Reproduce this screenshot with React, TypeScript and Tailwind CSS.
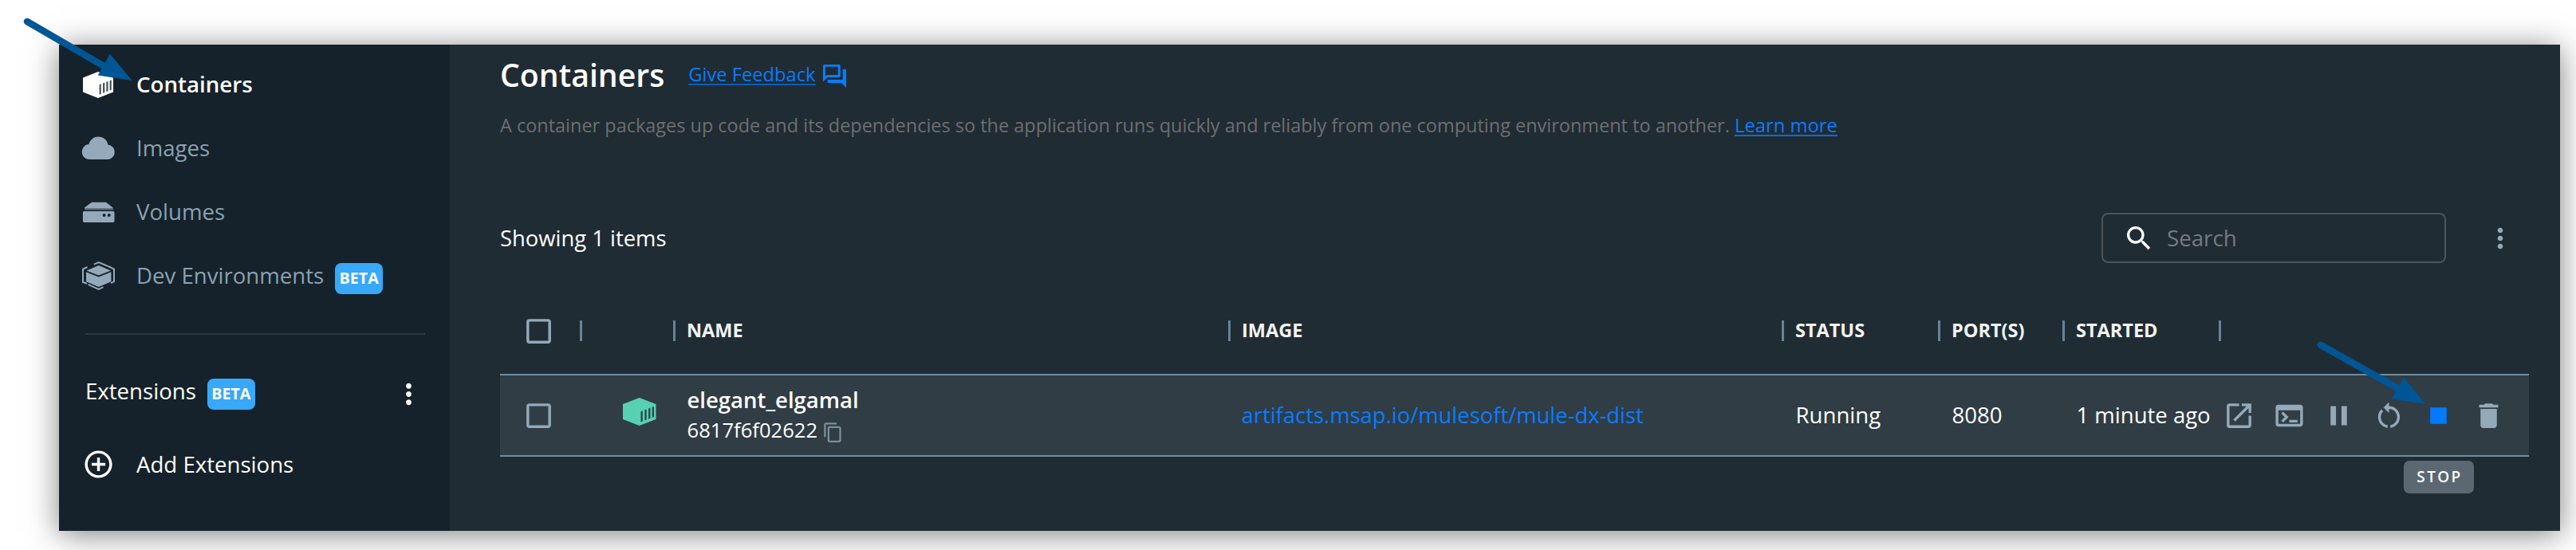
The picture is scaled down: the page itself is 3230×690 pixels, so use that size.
import React from "react";
import type { ReactNode } from "react";
import {
  MdAddCircleOutline,
  MdCheckBoxOutlineBlank,
  MdContentCopy,
  MdDelete,
  MdMoreVert,
  MdOpenInNew,
  MdOutlineForum,
  MdPause,
  MdRestartAlt,
  MdSearch,
  MdStop,
  MdTerminal,
} from "react-icons/md";

function ContainerIcon({ className }: { className: string }) {
  return (
    <svg viewBox="0 0 41.5 35" preserveAspectRatio="none" className={className}>
      <path fill="currentColor" d="M20.7 0 41.5 8v19L20.7 35 0 27V8Z" />
      <path
        fill="#202c33"
        opacity=".85"
        d="M22.500 17.200v13.200l2.300-.9V16.300ZM27.400 15.300v13.200l2.300-.9V14.400ZM32.100 13.500v13.200l2.300-.9V12.600ZM36.700 11.800v13.200l2.300-.9V10.900Z"
      />
    </svg>
  );
}

function CloudIcon() {
  return (
    <svg viewBox="0 0 42 42" className="size-[42px]" fill="currentColor">
      <path d="M10 35H32.600C37.900 35 41.700 31 41.700 25.800C41.700 20.800 38.200 17.200 33.400 16.500C32.300 10.400 27.300 6.600 21.400 6.600C15.800 6.600 11.400 9.900 9.500 15.700C4.500 16.300 .8 20.500 .8 25.500C.8 31 5 35 10 35Z" />
    </svg>
  );
}

function VolumeIcon() {
  return (
    <svg viewBox="0 0 42 42" className="size-[42px]" fill="currentColor">
      <path d="M12.900 8.700h18l8.600 6.800v1H4v-1Z" />
      <path d="M4 16.500h36.200v2H4Z" opacity=".55" />
      <path
        fillRule="evenodd"
        d="M3.700 20h36q1.800 0 1.800 1.800v10.400q0 1.800-1.800 1.800h-36q-1.800 0-1.800-1.800V21.800Q1.900 20 3.700 20ZM26.600 25a2 2 0 1 0 4 0a2 2 0 1 0-4 0ZM32.800 25a2 2 0 1 0 4 0a2 2 0 1 0-4 0Z"
      />
    </svg>
  );
}

function DevEnvironmentsIcon() {
  return (
    <svg viewBox="0 0 42 42" className="size-[42px]" fill="none" stroke="currentColor">
      <path fill="currentColor" stroke="none" d="m21.700 8 15.300 6.500-15.300 6-15.300-6Z" />
      <path fill="currentColor" stroke="none" d="m6 16.200 15.700 6.200 15.700-6.200v12L21.700 35 6 28.200Z" />
      <path strokeWidth="2" d="M15.800 6.600 21.700 4l15 6.300" />
      <path strokeWidth="2" d="m35.500 9.800 5.500 2.800v15.600l-4 1.900" />
      <path strokeWidth="2" d="M7.500 10 2 12.600V29l5 1.800" />
      <path strokeWidth="2" d="m8.500 31.800 13.200 6 5.800-2.600" />
    </svg>
  );
}

function Beta() {
  return (
    <span className="mt-[6px] flex h-[39px] w-[60px] items-center justify-center rounded-[8px] bg-[#38a8f9] text-[19.700px] font-bold text-white">
      BETA
    </span>
  );
}

function NavItem({ icon, label, active, beta }: { icon: ReactNode; label: string; active?: boolean; beta?: boolean }) {
  return (
    <div
      className={
        active
          ? "flex h-20 items-center text-[27.700px] font-semibold text-white"
          : "flex h-20 items-center text-[27.600px] text-[#8ba1b2]"
      }
    >
      <span className="flex w-[42px] shrink-0 justify-center text-[#94a9b9]">{icon}</span>
      <span className="ml-[27px] whitespace-nowrap">{label}</span>
      {beta && (
        <span className="ml-[14px]">
          <Beta />
        </span>
      )}
    </div>
  );
}

function Sidebar() {
  return (
    <aside className="flex w-[490px] shrink-0 flex-col bg-[#15222b] pt-[10px] pl-[28px]">
      <NavItem active icon={<ContainerIcon className="h-[33px] w-[38px] text-white" />} label="Containers" />
      <NavItem icon={<CloudIcon />} label="Images" />
      <NavItem icon={<VolumeIcon />} label="Volumes" />
      <NavItem beta icon={<DevEnvironmentsIcon />} label="Dev Environments" />
      <div className="mt-8 ml-[5px] h-[2px] w-[426px] bg-[#2a3841]" />
      <div className="mt-[31px] ml-[5px] flex h-20 w-[426px] items-center text-[27.600px] text-white">
        <span>Extensions</span>
        <span className="ml-[14px]">
          <Beta />
        </span>
        <MdMoreVert className="mt-[7px] ml-auto size-[41px]" />
      </div>
      <div className="mt-[12px] flex h-20 items-center text-[27.600px] text-white">
        <span className="flex w-[42px] justify-center pb-[2px]">
          <MdAddCircleOutline className="size-[41px]" />
        </span>
        <span className="ml-[27px]">Add Extensions</span>
      </div>
    </aside>
  );
}

const GRID = "grid grid-cols-[99.5px_117px_696px_694px_196px_156px_196px_1fr]";

function HeadCell({ label }: { label?: string }) {
  return (
    <div className="flex items-center text-[23.500px] font-bold text-[#f2f4f5]">
      <span className="h-[26px] w-[3px] bg-[#66839a]" />
      <span className="ml-[14.500px]">{label}</span>
    </div>
  );
}

function ContainerTable() {
  return (
    <div className="w-[2544px]">
      <div className={`${GRID} h-[108px]`}>
        <div className="flex items-center pl-[28px]">
          <MdCheckBoxOutlineBlank className="size-[41px] text-[#94a9b9]" />
        </div>
        <HeadCell />
        <HeadCell label="NAME" />
        <HeadCell label="IMAGE" />
        <HeadCell label="STATUS" />
        <HeadCell label="PORT(S)" />
        <HeadCell label="STARTED" />
        <HeadCell />
      </div>
      <div className={`${GRID} h-[104px] items-center border-y-2 border-[#6e8ba1] bg-[#303d45] text-[27.700px] text-white`}>
        <div className="pl-[28px]">
          <MdCheckBoxOutlineBlank className="size-[41px] text-[#94a9b9]" />
        </div>
        <div className="pb-[9px] pl-[54.500px]">
          <ContainerIcon className="h-[35px] w-[41.500px] text-[#56d1b2]" />
        </div>
        <div className="pl-[18px]">
          <div className="h-[39px] text-[27.500px] leading-[39px] font-semibold">elegant_elgamal</div>
          <div className="flex h-[39px] items-center text-[25.600px]">
            6817f6f02622
            <MdContentCopy className="mt-[3px] ml-[6px] size-[27px] text-[#7b8f9d]" />
          </div>
        </div>
        <div className="pl-[17px] text-[27.400px] text-[#087cff]">artifacts.msap.io/mulesoft/mule-dx-dist</div>
        <div className="pl-[18px] text-[27.600px]">Running</div>
        <div className="pl-[18px] text-[27.600px]">8080</div>
        <div className="pl-[18px] text-[27.500px] whitespace-nowrap">1 minute ago</div>
        <div className="flex items-center gap-[21.500px] pl-[5.500px] text-[#94a9b9]">
          <MdOpenInNew className="size-[41px]" />
          <MdTerminal className="size-[41px]" />
          <MdPause className="size-[41px]" />
          <MdRestartAlt className="size-[41px]" />
          <div className="relative">
            <MdStop className="size-[41px] text-[#007bff]" />
            <div className="absolute top-[77px] left-[-23px] flex h-[41px] w-[88px] items-center justify-center rounded-[7px] bg-[#5c6871] pl-[2px] text-[19px] font-semibold tracking-[2.400px] text-white">
              STOP
            </div>
          </div>
          <MdDelete className="size-[41px]" />
        </div>
      </div>
    </div>
  );
}

function Main() {
  return (
    <main className="flex grow flex-col bg-[#202c33] pl-[63px]">
      <div className="flex h-[76px] items-center">
        <h1 className="text-[39.200px] font-semibold text-white">Containers</h1>
        <a className="ml-[30px] flex items-center text-[23.700px] text-[#087cff]">
          <span className="underline decoration-[#0a5db8] decoration-2 underline-offset-[3px]">Give Feedback</span>
          <MdOutlineForum className="mt-[2px] ml-[6px] size-[35px]" />
        </a>
      </div>
      <p className="mt-[5px] h-10 text-[23.470px] leading-10 text-[#6c6f70]">
        A container packages up code and its dependencies so the application runs quickly and reliably from one computing
        environment to another.{" "}
        <a className="text-[23.800px] text-[#087cff] underline decoration-[#0a6bd8] decoration-2 underline-offset-[3px]">
          Learn more
        </a>
      </p>
      <div className="mt-[90px] flex h-[63px] w-[2544px] items-center text-[27.400px]">
        <span className="text-white">Showing 1 items</span>
        <div className="ml-auto flex h-[63px] w-[432px] items-center rounded-[8px] border-2 border-[#4b5458] pl-[25px] text-[27.700px] text-[#737b80]">
          <MdSearch className="size-[40px] text-white" />
          <span className="ml-[15px]">Search</span>
        </div>
        <MdMoreVert className="mr-[16px] ml-[48px] size-[40px] text-[#94a9b9]" />
      </div>
      <div className="mt-[31px]">
        <ContainerTable />
      </div>
    </main>
  );
}

function Arrows() {
  return (
    <svg
      viewBox="0 0 3230 690"
      className="pointer-events-none absolute inset-0 h-[690px] w-[3230px]"
      fill="#005695"
      stroke="#005695"
      strokeLinecap="round"
    >
      <path d="M34 27 130 81" strokeWidth="8.500" transform="rotate(0.800 34 27)" />
      <path d="M165.500 101 137.800 67.500 122.800 94.500Z" stroke="none" />
      <path d="M2909.800 432.700 3007 487.500" strokeWidth="8.500" />
      <path d="M3041.500 507 3013.800 473.500 2998.800 500.500Z" stroke="none" />
    </svg>
  );
}

export default function App() {
  return (
    <div className="relative h-[690px] w-[3230px] overflow-hidden bg-white pt-[56px] pl-[74px] font-['Open_Sans',sans-serif]">
      <div className="flex h-[610px] w-[3136px] shadow-[0_4px_36px_rgba(0,0,0,0.5)]">
        <Sidebar />
        <Main />
      </div>
      <Arrows />
    </div>
  );
}
